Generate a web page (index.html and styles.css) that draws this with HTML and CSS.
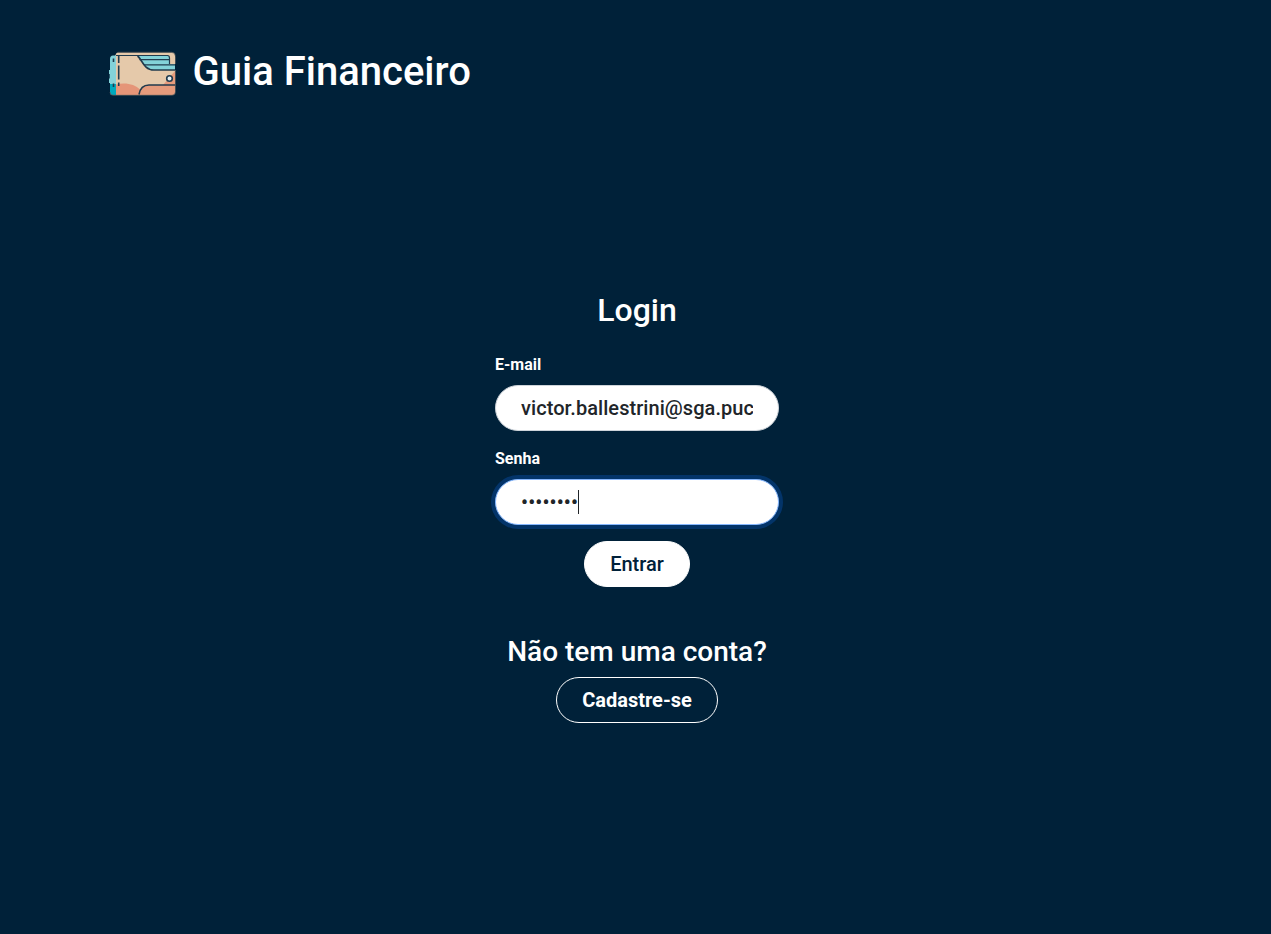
FILE: index.html
```html
<!DOCTYPE html>
<html lang="pt-BR">
<head>
<meta charset="utf-8">
<title>Guia Financeiro</title>
<link rel="stylesheet" href="styles.css">
</head>
<body>
<header class="header">
  <svg class="logo" viewBox="0 0 80 58" width="80" height="58" aria-hidden="true">
    <path fill="#e5c9aa" d="M14 10q0-1.500 2-1.500H70q3 0 3 3V48q0 3-3 3H13V12z"/>
    <path fill="#83d2d9" d="M8 15q0-3.500 3-3.500H14V51H10.500q-2.500 0-2.500-3V39H7V34.500h.7V30H7V26h1z"/>
    <path fill="#00a9bd" d="M8 40h6v11h-3.500q-2.500 0-2.500-3z"/>
    <path fill="#e59578" d="M14 40.500c9-2.500 19-.5 24 5l-1 5.500H14z"/>
    <path fill="#e59b7c" d="M37 51c1-7 4-10 10-10h14l12-14v21q0 3-3 3z"/>
    <path fill="#83d2d9" d="M36 12h31v8h6v6H52c-9-1-11-9-16-14z"/>
    <path fill="#e5c9aa" d="M67.500 12H71v8h-3.500z"/>
    <path class="ink soft" d="M16 8.300h53.500q4 0 4 4V20M8 48q0 3.300 3 3.300h59q3.500 0 3.500-3.300V26"/>
    <path class="ink thin" d="M14 11.500h51.500q2 0 2 2.500V20M37.500 15.700H67M42 20.800h31"/>
    <path class="ink" d="M35.500 12c4.500 3 6 14 16.500 14h21M16.700 12v7M16.700 21.500v14M16.700 38.500v3.500M11.500 14.500v3.500M11.500 39.500v3.500M37 50.500c1-6 4-9.500 10-9.500h26"/>
    <circle class="snap" cx="67.500" cy="34.500" r="2.800"/>
  </svg>
  <h1 class="brand">Guia Financeiro</h1>
</header>
<main class="main">
  <form class="login">
    <h2 class="title">Login</h2>
    <label class="label">E-mail</label>
    <div class="field"><span class="value">victor.ballestrini@sga.puc</span></div>
    <label class="label">Senha</label>
    <div class="field focused"><span class="value dots">••••••••</span><i class="caret"></i></div>
    <button class="btn solid" type="button">Entrar</button>
  </form>
  <section class="signup">
    <h3 class="question">Não tem uma conta?</h3>
    <button class="btn outline" type="button">Cadastre-se</button>
  </section>
</main>
</body>
</html>
```
FILE: styles.css
```css
* { box-sizing: border-box; }
body {
  margin: 0;
  height: 934px;
  overflow: hidden;
  background: #002139;
  color: #fff;
  font-family: Roboto, "Liberation Sans", sans-serif;
  font-size: 16px;
  line-height: 1.5;
}
h1, h2, h3 { margin: 0; font-weight: 500; line-height: 1.2; }
.header { display: flex; height: 58px; margin-top: 44px; padding-left: 102px; }
.logo { display: block; }
.ink { fill: none; stroke: #203b4e; stroke-width: 1.6; }
.thin { stroke-width: 1.2; }
.soft { stroke: #56595b; stroke-width: .8; }
.snap { fill: #e5eef0; stroke: #203b4e; stroke-width: 1.6; }
.brand { margin: 4px 0 0 10.5px; font-size: 40px; }
.main { display: flex; flex-direction: column; align-items: center; padding: 189px 0 0 3px; }
.login { display: flex; flex-direction: column; width: 284px; }
.title { align-self: center; font-size: 32px; line-height: 38px; margin-bottom: 24px; }
.label { font-size: 16px; font-weight: 700; line-height: 24px; margin-bottom: 8px; }
.field {
  display: flex;
  align-items: center;
  height: 46px;
  margin-bottom: 16px;
  padding: 0 25px;
  border: 1px solid #ced4da;
  border-radius: 23px;
  background: #fff;
  color: #212529;
  font-size: 20px;
  font-weight: 500;
  line-height: 30px;
}
.value { overflow: hidden; white-space: nowrap; letter-spacing: .06px; }
.dots { letter-spacing: .14px; }
.focused { border-color: #86b7fe; box-shadow: 0 0 0 4px #033469; }
.caret { width: 1px; height: 24px; background: #212529; }
.btn {
  height: 46px;
  padding: 0 25px;
  border: 1px solid #fff;
  border-radius: 23px;
  font-family: inherit;
  font-size: 20px;
  line-height: 30px;
}
.solid { align-self: center; background: #fff; color: #002139; font-weight: 500; }
.signup { display: flex; flex-direction: column; align-items: center; margin-top: 48px; }
.question { font-size: 28px; line-height: 34px; margin-bottom: 8px; }
.outline { background: transparent; color: #fff; font-weight: 700; }
```
